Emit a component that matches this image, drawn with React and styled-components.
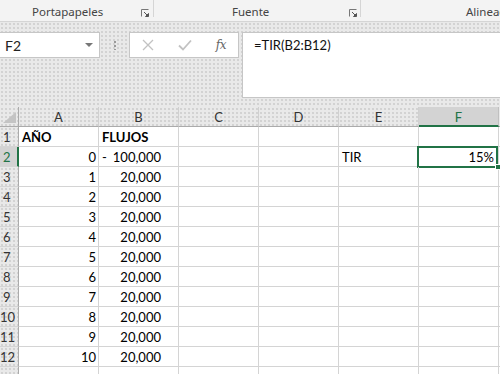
import React from "react";
import styled, { createGlobalStyle, css } from "styled-components";

const GREEN = "#217346";
const GRID = "#d4d4d4";

const Global = createGlobalStyle`
  html, body { margin: 0; padding: 0; background: #fff; }
  body { width: 500px; height: 374px; overflow: hidden; font-family: Lato, "Liberation Sans", sans-serif; }
  * { box-sizing: border-box; }
`;

const dotted = css`
  background-color: #e9e9e9;
  background-image: radial-gradient(circle, #d2d2d2 0.7px, transparent 0.9px);
  background-size: 4px 4px;
`;

const Page = styled.div`
  width: 500px;
  height: 374px;
  overflow: hidden;
  display: flex;
  flex-direction: column;
  background: #fff;
`;

const Ribbon = styled.div`
  height: 22px;
  flex: none;
  display: flex;
  background: #f3f3f3;
  border-bottom: 1px solid #d5d5d5;
  overflow: hidden;
`;

const Group = styled.div`
  flex: none;
  width: ${(p) => p.$w}px;
  display: flex;
  align-items: flex-end;
  justify-content: space-between;
  padding-left: ${(p) => p.$pl}px;
  padding-right: ${(p) => p.$pr}px;
  padding-bottom: 2px;
  white-space: nowrap;
`;

const GroupLabel = styled.span`
  font-family: "Noto Sans", "Open Sans", sans-serif;
  font-size: 11.5px;
  line-height: 14px;
  color: #444;
`;

const Sep = styled.div`
  flex: none;
  width: 1px;
  height: 17px;
  background: #d5d5d5;
`;

const Launcher = () => (
  <svg width="8" height="8" viewBox="0 0 8 8" style={{ marginBottom: 2 }}>
    <path d="M0.5 7.5V0.5H7.5" fill="none" stroke="#777" strokeWidth="1" />
    <path d="M3 3L7 7M4.5 7.5H7.5V4.5Z" fill="#555" stroke="#555" strokeWidth="1" />
  </svg>
);

const Toolbar = styled.div`
  ${dotted}
  height: 85px;
  flex: none;
  display: flex;
  align-items: flex-start;
  padding-top: 10px;
`;

const NameBox = styled.div`
  flex: none;
  width: 101px;
  height: 26px;
  margin-left: -1px;
  background: #fff;
  border: 1px solid #c6c6c6;
  display: flex;
  align-items: center;
  justify-content: space-between;
  padding: 0 6px 0 5px;
  font-size: 14px;
  color: #222;
`;

const Caret = styled.span`
  width: 0;
  height: 0;
  border-left: 4px solid transparent;
  border-right: 4px solid transparent;
  border-top: 4px solid #777;
`;

const Grip = styled.div`
  flex: none;
  width: 2px;
  height: 10px;
  margin: 8px 13px 0 14px;
  background-image: radial-gradient(circle, #9a9a9a 0.9px, transparent 1.1px);
  background-size: 2px 4px;
`;

const FxBox = styled.div`
  flex: none;
  width: 110px;
  height: 26px;
  background: #fff;
  border: 1px solid #c6c6c6;
  display: flex;
  align-items: center;
  justify-content: space-between;
  padding: 0 12px 0 12px;
`;

const FxText = styled.span`
  font-family: "DejaVu Serif", "Liberation Serif", serif;
  font-style: italic;
  font-size: 12px;
  color: #666;
  letter-spacing: -0.5px;
`;

const FormulaInput = styled.div`
  flex: 1;
  height: 66px;
  margin-left: 3px;
  margin-right: -2px;
  background: #fff;
  border: 1px solid #c6c6c6;
  padding: 4px 0 0 11px;
  font-size: 13px;
  color: #111;
`;

const Sheet = styled.div`
  flex: none;
  display: grid;
  grid-template-columns: 19px repeat(7, 80px);
  grid-auto-rows: 20px;
  width: 580px;
`;

const Cell = styled.div`
  position: relative;
  border-right: 1px solid ${GRID};
  border-bottom: 1px solid ${GRID};
  font-size: 13px;
  line-height: 20px;
  padding: 0 ${(p) => p.$pr ?? 3}px 0 3px;
  white-space: nowrap;
  color: #000;
  font-weight: ${(p) => (p.$bold ? 700 : 400)};
  display: flex;
  justify-content: ${(p) => (p.$split ? "space-between" : p.$right ? "flex-end" : "flex-start")};
  ${(p) =>
    p.$selected &&
    css`
      &::after {
        content: "";
        position: absolute;
        top: -1px;
        left: -2px;
        right: 0;
        bottom: -2px;
        border: 2px solid ${GREEN};
        pointer-events: none;
      }
    `}
`;

const FillHandle = styled.span`
  position: absolute;
  right: -3px;
  bottom: -4px;
  width: 6px;
  height: 6px;
  background: ${GREEN};
  border: 1px solid #fff;
  z-index: 2;
`;

const ColHead = styled.div`
  ${dotted}
  ${(p) => p.$active && css`background: #d3d3d3;`}
  border-right: 1px solid ${(p) => (p.$active ? "#c0c0c0" : "#d0d0d0")};
  border-bottom: ${(p) => (p.$active ? `2px solid ${GREEN}` : "1px solid #ababab")};
  font-size: 13px;
  line-height: 20px;
  text-align: center;
  color: ${(p) => (p.$active ? GREEN : "#333")};
`;

const Corner = styled.div`
  ${dotted}
  border-right: 1px solid #ababab;
  border-bottom: 1px solid #ababab;
  display: flex;
  align-items: flex-end;
  justify-content: flex-end;
  padding: 0 2px 3px 0;
`;

const CornerTri = styled.span`
  width: 0;
  height: 0;
  border-left: 13px solid transparent;
  border-bottom: 11px solid #c4c4c4;
`;

const RowHead = styled.div`
  ${dotted}
  ${(p) => p.$active && css`background: #d3d3d3;`}
  border-right: ${(p) => (p.$active ? `2px solid ${GREEN}` : "1px solid #ababab")};
  border-bottom: 1px solid ${GRID};
  font-size: 13px;
  line-height: 20px;
  padding-left: ${(p) => (p.$n >= 10 ? 0 : 3)}px;
  color: ${(p) => (p.$active ? GREEN : "#333")};
  overflow: hidden;
  white-space: nowrap;
`;

const cols = ["A", "B", "C", "D", "E", "F"];

const fmt = (n) => n.toLocaleString("en-US");

const rows = [];
for (let i = 0; i <= 10; i++) rows.push({ year: i, flow: i === 0 ? -100000 : 20000 });

export default function App() {
  return (
    <Page>
      <Global />
      <Ribbon>
        <Group $w={153} $pl={32} $pr={4}>
          <GroupLabel>Portapapeles</GroupLabel>
          <Launcher />
        </Group>
        <Sep />
        <Group $w={206} $pl={78} $pr={3}>
          <GroupLabel>Fuente</GroupLabel>
          <Launcher />
        </Group>
        <Sep />
        <Group $w={200} $pl={105} $pr={0}>
          <GroupLabel>Alineación</GroupLabel>
        </Group>
      </Ribbon>
      <Toolbar>
        <NameBox>
          <span>F2</span>
          <Caret />
        </NameBox>
        <Grip />
        <FxBox>
          <svg width="12" height="12" viewBox="0 0 12 12">
            <path d="M1 1L11 11M11 1L1 11" stroke="#c2c2c2" strokeWidth="1.3" fill="none" />
          </svg>
          <svg width="14" height="12" viewBox="0 0 14 12">
            <path d="M1 6.5L5 10.5L13 1.5" stroke="#c2c2c2" strokeWidth="1.8" fill="none" />
          </svg>
          <FxText>fx</FxText>
        </FxBox>
        <FormulaInput>=TIR(B2:B12)</FormulaInput>
      </Toolbar>
      <Sheet>
        <Corner>
          <CornerTri />
        </Corner>
        {cols.map((c) => (
          <ColHead key={c} $active={c === "F"}>
            {c}
          </ColHead>
        ))}
        <ColHead />

        <RowHead $n={1}>1</RowHead>
        <Cell $bold>AÑO</Cell>
        <Cell $bold>FLUJOS</Cell>
        <Cell />
        <Cell />
        <Cell />
        <Cell />
        <Cell />

        {rows.map((r, idx) => {
          const n = idx + 2;
          return (
            <React.Fragment key={n}>
              <RowHead $n={n} $active={n === 2}>
                {n}
              </RowHead>
              <Cell $right $pr={2}>
                {r.year}
              </Cell>
              <Cell $split={r.flow < 0} $right $pr={17}>
                {r.flow < 0 && <span>-</span>}
                <span>{fmt(Math.abs(r.flow))}</span>
              </Cell>
              <Cell />
              <Cell />
              <Cell>{n === 2 ? "TIR" : ""}</Cell>
              {n === 2 ? (
                <Cell $right $pr={4} $selected>
                  15%
                  <FillHandle />
                </Cell>
              ) : (
                <Cell />
              )}
              <Cell />
            </React.Fragment>
          );
        })}
        <RowHead $n={13} />
        {[...cols, "G"].map((c) => (
          <Cell key={c} />
        ))}
      </Sheet>
    </Page>
  );
}
